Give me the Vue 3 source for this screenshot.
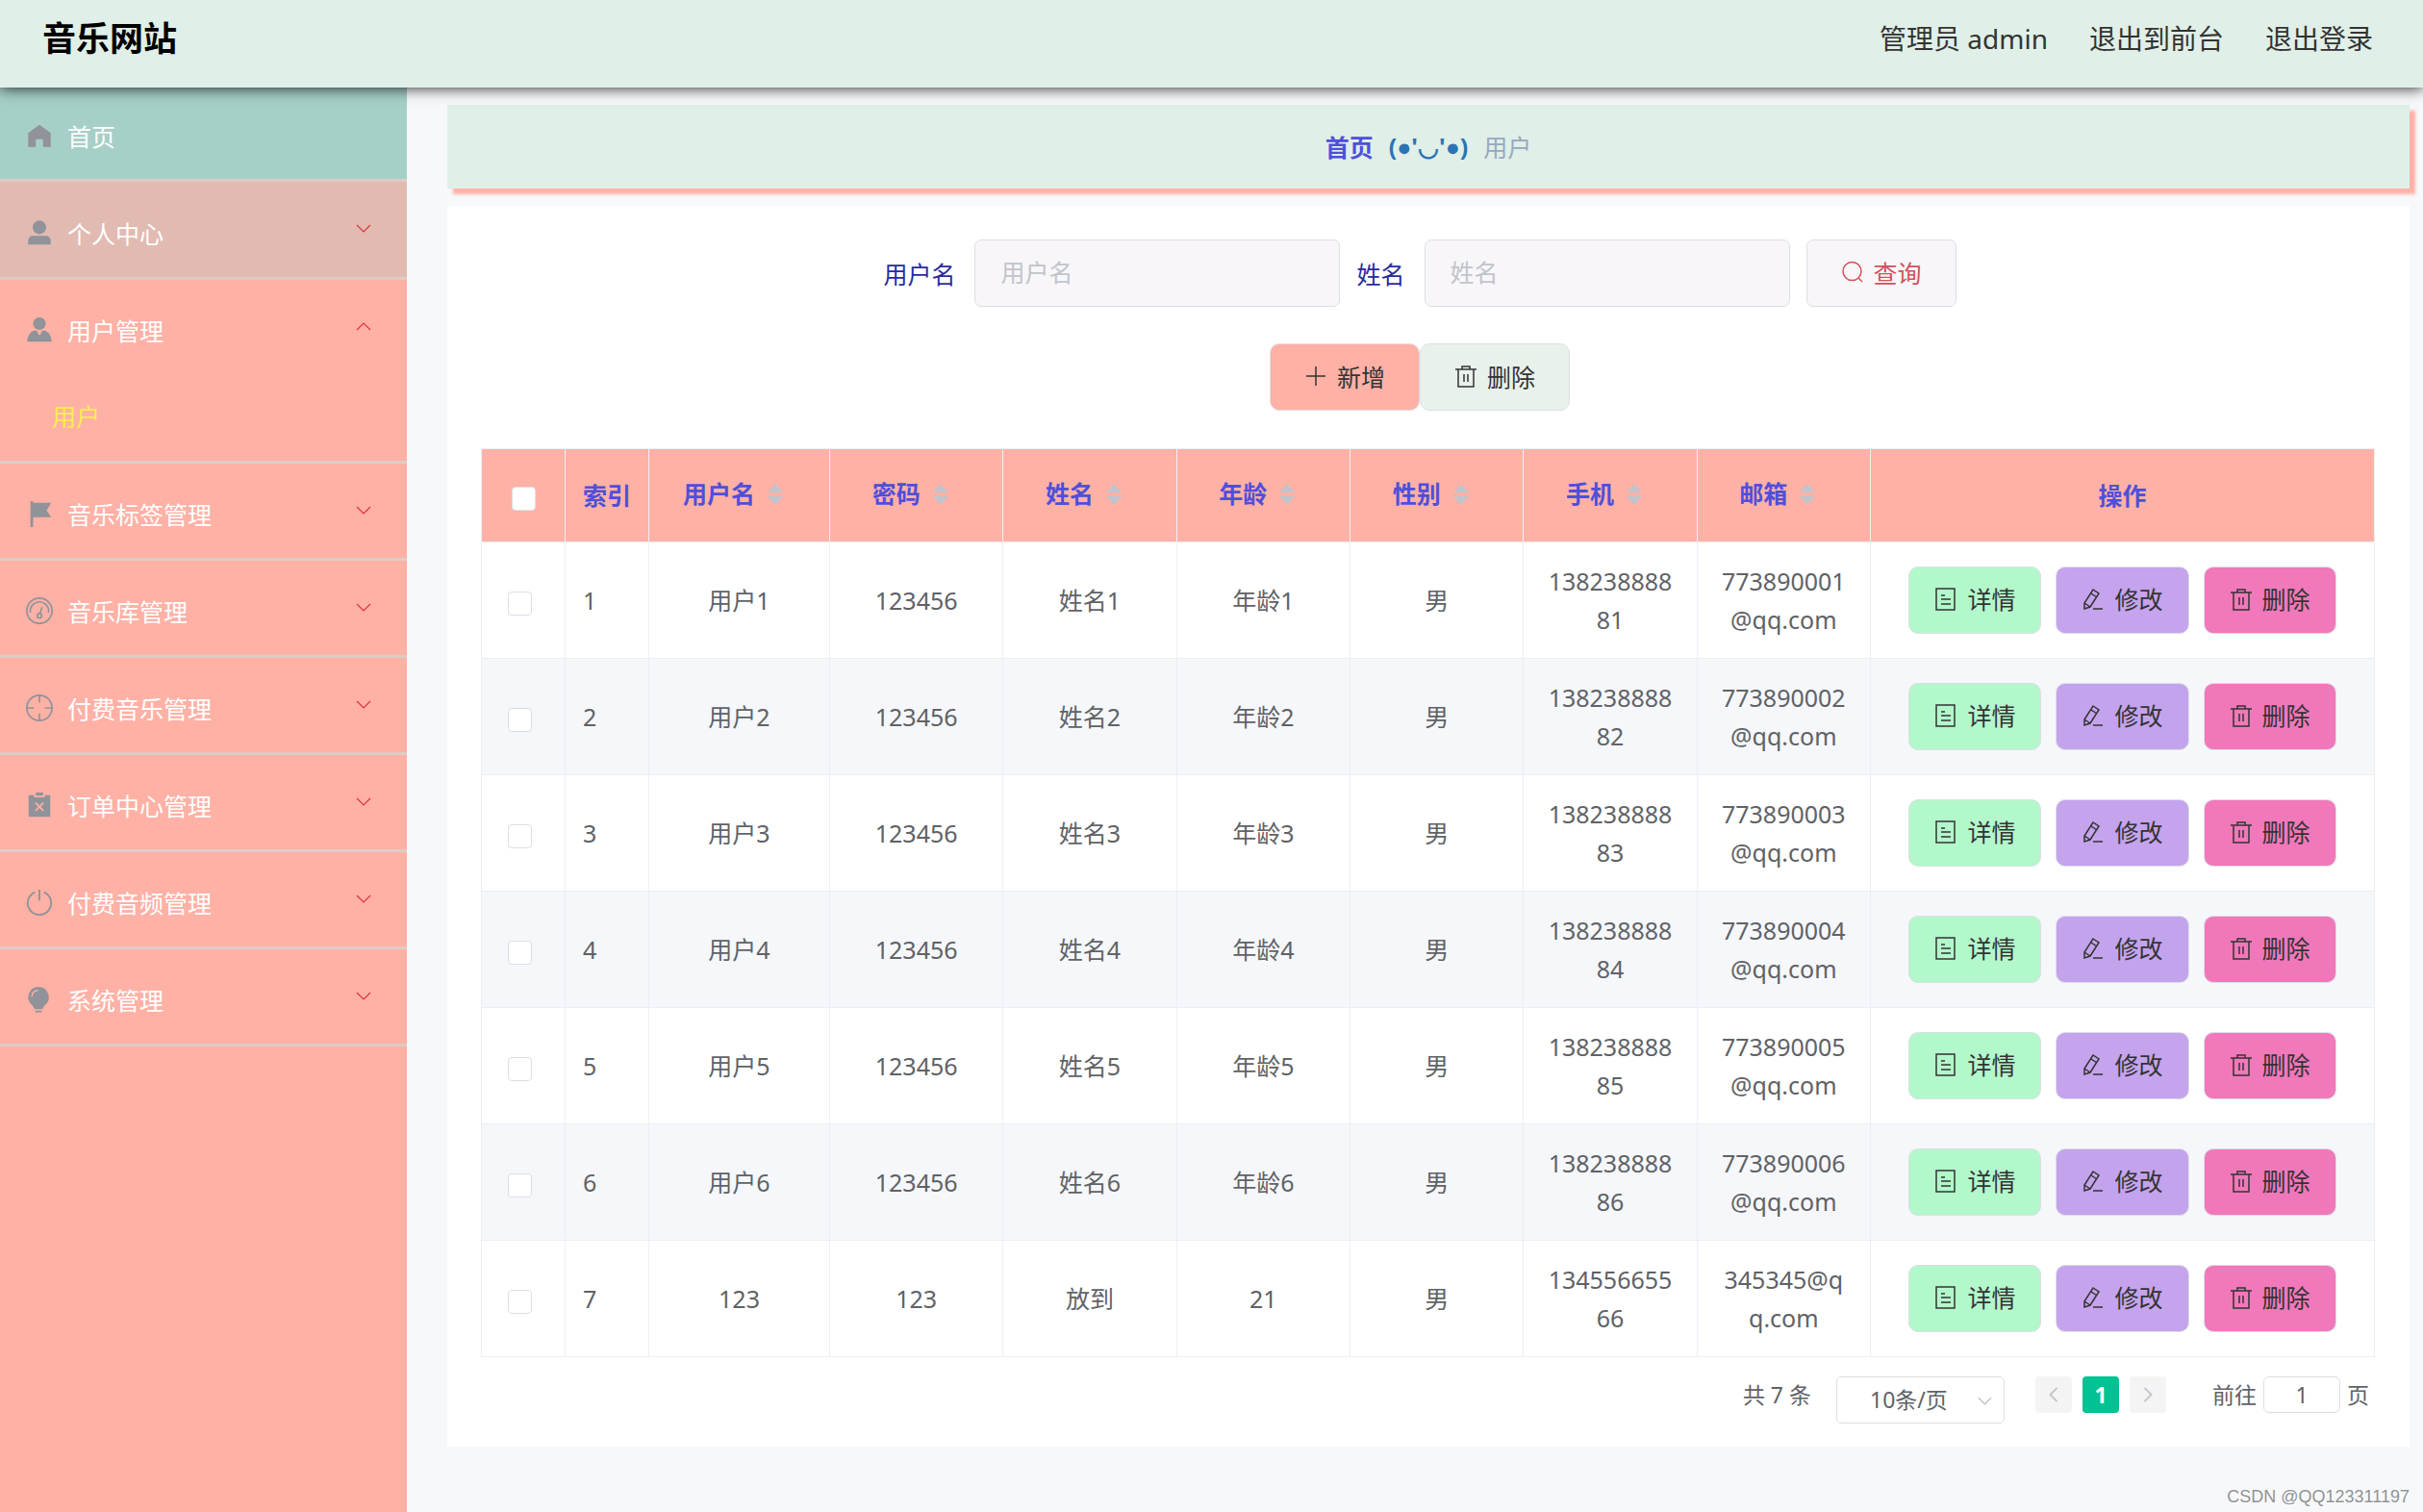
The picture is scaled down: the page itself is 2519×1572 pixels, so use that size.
<script setup>
import { ref, computed } from 'vue'

const menus = ref([
  { name: '首页', icon: 'home', type: 'home' },
  { name: '个人中心', icon: 'user', type: 'hover' },
  { name: '用户管理', icon: 'custom', open: true, children: ['用户'] },
  { name: '音乐标签管理', icon: 'flag' },
  { name: '音乐库管理', icon: 'gauge' },
  { name: '付费音乐管理', icon: 'aim' },
  { name: '订单中心管理', icon: 'order' },
  { name: '付费音频管理', icon: 'power' },
  { name: '系统管理', icon: 'bulb' }
])

const columns = [
  { prop: 'username', label: '用户名' },
  { prop: 'password', label: '密码' },
  { prop: 'realname', label: '姓名' },
  { prop: 'age', label: '年龄' },
  { prop: 'sex', label: '性别' },
  { prop: 'phone', label: '手机' },
  { prop: 'email', label: '邮箱' }
]

const dataList = ref([])
for (let i = 1; i <= 6; i++) {
  dataList.value.push({
    username: '用户' + i,
    password: '123456',
    realname: '姓名' + i,
    age: '年龄' + i,
    sex: '男',
    phone: '1382388888' + i,
    email: '77389000' + i + '@qq.com'
  })
}
dataList.value.push({
  username: '123',
  password: '123',
  realname: '放到',
  age: '21',
  sex: '男',
  phone: '13455665566',
  email: '345345@qq.com'
})

const searchForm = ref({ username: '', realname: '' })
const selected = ref([])
const pageSize = ref('10')
const pageIndex = ref('1')

const allChecked = computed({
  get: () => dataList.value.length > 0 && selected.value.length === dataList.value.length,
  set: (val) => {
    selected.value = val ? dataList.value.map((_, i) => i) : []
  }
})

const toggleMenu = (menu) => {
  if (menu.type === 'home') return
  menu.open = !menu.open
}

const deleteRow = (index) => {
  dataList.value.splice(index, 1)
  selected.value = []
}

const deleteSelected = () => {
  dataList.value = dataList.value.filter((_, i) => !selected.value.includes(i))
  selected.value = []
}
</script>

<template>
  <div class="layout">
    <header class="navbar">
      <h1 class="title">音乐网站</h1>
      <div class="right-menu">
        <span>管理员 admin</span>
        <a href="#">退出到前台</a>
        <a href="#">退出登录</a>
      </div>
    </header>

    <div class="body">
      <!-- 侧边菜单 -->
      <nav class="sidebar">
        <div v-for="menu in menus" :key="menu.name" class="menu-item" :class="menu.type">
          <button type="button" class="menu-title" @click="toggleMenu(menu)">
            <svg class="menu-icon" viewBox="0 0 32 32" fill="currentColor">
              <path v-if="menu.icon === 'home'" d="M16 4 3.500 13v15.500H12V20h8v8.500h8.500V13z" />
              <template v-else-if="menu.icon === 'user'">
                <circle cx="16" cy="10" r="7.500" />
                <path d="M3.500 29v-4.500a5 5 0 0 1 5-5h15a5 5 0 0 1 5 5V29z" />
              </template>
              <template v-else-if="menu.icon === 'custom'">
                <circle cx="16" cy="9" r="7" />
                <path d="M2.500 29c0-6 3-11 8-12.500l3.500 1 0 2 2 2.500 2-2.500 0-2 3.500-1c5 1.500 8 6.500 8 12.500z" />
              </template>
              <path v-else-if="menu.icon === 'flag'" d="M6 2h3v2h20l-5 8.500 5 7.500H9v11H6z" />
              <g v-else-if="menu.icon === 'gauge'" fill="none" stroke="currentColor" stroke-width="1.800">
                <circle cx="16" cy="16" r="14" />
                <path d="M6 18a10 10 0 0 1 3-9 10 10 0 0 1 14 0 10 10 0 0 1 3 9M19 12l-2.500 7" />
                <circle cx="16" cy="21.500" r="2.500" />
              </g>
              <g v-else-if="menu.icon === 'aim'" fill="none" stroke="currentColor" stroke-width="1.800">
                <circle cx="16" cy="16" r="14" />
                <path d="M16 2v8M16 22v8M2 16h8M22 16h8" />
              </g>
              <template v-else-if="menu.icon === 'order'">
                <path d="M12 2h8v3.500h-8z" />
                <path fill-rule="evenodd" d="M4 5h6v2.500h12V5h6v24H4zM11 14l1.300-1.300L16 16.500l3.700-3.800L21 14l-3.700 3.800L21 21.500l-1.300 1.300L16 19.100l-3.700 3.700L11 21.500l3.700-3.700z" />
              </template>
              <path v-else-if="menu.icon === 'power'" d="M16 2v12M11 5a13 13 0 1 0 10 0" fill="none" stroke="currentColor" stroke-width="2" />
              <template v-else>
                <path d="M15 2a11.500 11.500 0 0 0-7 20.500L11 27h8l3-4.500A11.500 11.500 0 0 0 15 2zM11.500 28.500h7v2h-7z" />
                <path class="shine" d="M7.500 13a7 7 0 0 1 7-7" fill="none" stroke-width="1.500" />
              </template>
            </svg>
            <span class="menu-name">{{ menu.name }}</span>
            <svg v-if="menu.type !== 'home'" class="arrow" :class="{ up: menu.open }" viewBox="0 0 16 9">
              <path d="m1 1 7 7 7-7" fill="none" stroke="currentColor" stroke-width="1.200" />
            </svg>
          </button>
          <template v-if="menu.open && menu.children">
            <a v-for="child in menu.children" :key="child" href="#" class="sub-item">{{ child }}</a>
          </template>
        </div>
      </nav>

      <main class="main">
        <div class="breadcrumb">
          <a href="#">首页</a>
          <span class="separator">(●'◡'●)</span>
          <span class="current">用户</span>
        </div>

        <section class="content">
          <form class="search-form" @submit.prevent>
            <label for="username">用户名</label>
            <input id="username" v-model="searchForm.username" type="text" placeholder="用户名">
            <label for="realname">姓名</label>
            <input id="realname" v-model="searchForm.realname" type="text" placeholder="姓名">
            <button type="submit" class="btn btn-search">
              <svg viewBox="0 0 24 24"><circle cx="11.500" cy="11" r="9.500" /><path d="m18 18 4 4" /></svg>
              查询
            </button>
          </form>

          <div class="toolbar">
            <button type="button" class="btn btn-add">
              <svg viewBox="0 0 24 24"><path d="M12 2v20M2 12h20" /></svg>
              新增
            </button>
            <button type="button" class="btn btn-remove" @click="deleteSelected">
              <svg viewBox="0 0 24 24"><path d="M1 5h22M8 5V2h8v3M4 5v18h16V5M10 10v8M14 10v8" /></svg>
              删除
            </button>
          </div>

          <table class="data-table">
            <colgroup>
              <col class="col-check">
              <col class="col-index">
              <col class="col-name">
              <col v-for="n in 6" :key="n" class="col-text">
              <col class="col-action">
            </colgroup>
            <thead>
              <tr>
                <th><input v-model="allChecked" type="checkbox" aria-label="全选"></th>
                <th class="left">索引</th>
                <th v-for="col in columns" :key="col.prop">
                  <div class="sortable">
                    {{ col.label }}
                    <svg viewBox="0 0 42 24"><path d="M21 2l8 9H13zM21 24l8-9H13z" /></svg>
                  </div>
                </th>
                <th>操作</th>
              </tr>
            </thead>
            <tbody>
              <tr v-for="(row, index) in dataList" :key="row.phone">
                <td class="left"><input v-model="selected" type="checkbox" :value="index" :aria-label="row.username"></td>
                <td class="left">{{ index + 1 }}</td>
                <td v-for="col in columns" :key="col.prop">{{ row[col.prop] }}</td>
                <td>
                  <div class="actions">
                    <button type="button" class="btn btn-detail">
                      <svg viewBox="0 0 24 24"><path d="M2 1h19v22H2zM7 8h4M7 12h10M7 17h10" /></svg>
                      详情
                    </button>
                    <button type="button" class="btn btn-edit">
                      <svg viewBox="0 0 24 24"><path d="M12 2l6 4L9 20l-6 2V16zM10 6l6 4M3 16l6 4M12 22h10" /></svg>
                      修改
                    </button>
                    <button type="button" class="btn btn-delete" @click="deleteRow(index)">
                      <svg viewBox="0 0 24 24"><path d="M1 5h22M8 5V2h8v3M4 5v18h16V5M10 10v8M14 10v8" /></svg>
                      删除
                    </button>
                  </div>
                </td>
              </tr>
            </tbody>
          </table>

          <!-- 分页 -->
          <div class="pagination">
            <span class="total">共 {{ dataList.length }} 条</span>
            <div class="size-select">
              <select v-model="pageSize" aria-label="每页条数">
                <option value="10">10条/页</option>
                <option value="20">20条/页</option>
                <option value="50">50条/页</option>
              </select>
              <svg viewBox="0 0 16 9"><path d="m1 1 7 7 7-7" /></svg>
            </div>
            <div class="pager">
              <button type="button" aria-label="上一页" disabled>
                <svg viewBox="0 0 12 20"><path d="m10 2-8 8 8 8" /></svg>
              </button>
              <button type="button" class="active">1</button>
              <button type="button" aria-label="下一页" disabled>
                <svg viewBox="0 0 12 20"><path d="m2 2 8 8-8 8" /></svg>
              </button>
            </div>
            <label class="jump">前往 <input v-model="pageIndex" type="text"> 页</label>
          </div>
        </section>

        <footer class="watermark">CSDN @QQ123311197</footer>
      </main>
    </div>
  </div>
</template>

<style>
body {
  margin: 0;
  background: #f6f8fa;
}
</style>

<style scoped>
.layout {
  display: flex;
  flex-direction: column;
  min-height: 100vh;
  font-family: "Noto Sans", "Noto Sans CJK SC", sans-serif;
  font-size: 25px;
  color: #606266;
}
.layout * {
  box-sizing: border-box;
}
button,
input,
select {
  font: inherit;
  color: inherit;
}
button {
  cursor: pointer;
}
a {
  text-decoration: none;
}

.navbar {
  position: relative;
  z-index: 1;
  display: flex;
  justify-content: space-between;
  align-items: center;
  height: 91px;
  padding: 0 52px 12px 44px;
  background: #e0efe7;
  box-shadow: 0 1px 14px rgba(0, 0, 0, 0.8);
}
.title {
  margin: 0;
  font-size: 35px;
  line-height: 40px;
  color: #000;
}
.right-menu {
  display: flex;
  gap: 43px;
  font-size: 28px;
  line-height: 40px;
  color: #333;
}
.right-menu a {
  color: #333;
}

.body {
  display: flex;
  flex: 1;
}

.sidebar {
  width: 423px;
  flex-shrink: 0;
  background: #ffb1a6;
}
.menu-item {
  border-bottom: 3px solid #dfcbc5;
}
.menu-title {
  display: flex;
  align-items: center;
  width: 100%;
  height: 98px;
  padding: 6px 37px 0 26px;
  border: 0;
  background: none;
  color: #fff;
  text-align: left;
}
.home {
  background: #a6cfc7;
}
.home .menu-title {
  height: 95px;
  padding-top: 4px;
}
.hover {
  background: #e1bbb2;
}
.hover .menu-title {
  height: 99px;
}
.menu-icon {
  width: 30px;
  height: 30px;
  margin-right: 14px;
  color: #909399;
}
.shine {
  stroke: #ffb1a6;
}
.menu-name {
  flex: 1;
}
.arrow {
  width: 16px;
  height: 9px;
  margin-bottom: 8px;
  color: #e0303c;
}
.arrow.up {
  transform: rotate(180deg);
}
.sub-item {
  display: block;
  height: 90px;
  padding-left: 54px;
  line-height: 88px;
  color: #fbee4b;
}

.main {
  flex: 1;
  min-width: 0;
  padding: 18px 14px 0 42px;
}

.breadcrumb {
  display: flex;
  justify-content: center;
  align-items: center;
  gap: 16px;
  height: 87px;
  padding-bottom: 2px;
  background: #e0efe7;
  box-shadow: 6px 6px 3px #ffb1a6;
}
.breadcrumb a {
  font-weight: bold;
  color: #4f4fd9;
}
.separator {
  font-family: "Noto Sans", "Liberation Sans", sans-serif;
  font-weight: bold;
  color: #2c73b5;
}
.current {
  color: #97a8be;
}

.content {
  margin-top: 18px;
  padding: 35px 36px 24px 35px;
  background: #fff;
}

.search-form {
  display: flex;
  justify-content: center;
  align-items: center;
  padding-right: 17px;
}
.search-form label {
  margin-right: 20px;
  color: #2a2a9c;
}
.search-form input {
  width: 380px;
  height: 70px;
  margin-right: 17px;
  padding: 0 26px 2px;
  border: 1px solid #dcdfe6;
  border-radius: 7px;
  background: #f8f6f8;
}
.search-form input::placeholder {
  color: #c0c4cc;
}

.btn {
  display: inline-flex;
  align-items: center;
  justify-content: center;
  gap: 10px;
  height: 70px;
  padding: 0 35px 2px;
  border: 1px solid #dcdfe6;
  border-radius: 10px;
  color: #333;
  white-space: nowrap;
}
.btn svg {
  width: 24px;
  height: 24px;
  fill: none;
  stroke: currentColor;
  stroke-width: 1.5;
}
.btn-search {
  border-radius: 7px;
  background: #f8f6f8;
  color: #d3505c;
}
.toolbar {
  display: flex;
  justify-content: center;
  margin: 38px 0 39px;
  padding-right: 17px;
}
.btn-add {
  background: #ffb1a6;
}
.btn-remove {
  background: #e9f1eb;
}

.data-table {
  width: 100%;
  table-layout: fixed;
  border-collapse: separate;
  border-spacing: 0;
  border: 1px solid #ebeef5;
  border-width: 1px 0 0 1px;
  line-height: 40px;
  text-align: center;
}
.col-check,
.col-index {
  width: 87px;
}
.col-name {
  width: 188px;
}
.col-action {
  width: 524px;
}
.data-table th,
.data-table td {
  border: 1px solid #ebeef5;
  border-width: 0 1px 1px 0;
}
.data-table th {
  height: 97px;
  padding: 0;
  background: #ffb1a6;
  color: #4f4fd9;
}
.data-table td {
  height: 121px;
  padding: 0 22px;
  word-break: break-all;
}
.data-table td:last-child {
  padding: 0;
}
.data-table .left {
  padding: 0 0 0 18px;
  text-align: left;
}
.data-table td.left:first-child {
  padding-left: 27px;
}
.data-table tbody tr:nth-child(even) {
  background: #f5f7fa;
}
.data-table input {
  appearance: none;
  width: 25px;
  height: 25px;
  margin: 0;
  border: 1px solid #dcdfe6;
  border-radius: 4px;
  background: #fff;
  vertical-align: middle;
}
.data-table input:checked {
  background: #00c292;
}
.sortable {
  display: flex;
  justify-content: center;
  align-items: center;
  padding-bottom: 5px;
}
.sortable svg {
  width: 42px;
  height: 24px;
  fill: #c0c4cc;
}
.actions {
  display: flex;
  justify-content: center;
  gap: 15px;
}
.actions .btn {
  padding: 0 26px 2px;
}
.btn-detail {
  background: rgba(171, 247, 197, 0.9);
}
.btn-edit {
  background: rgba(191, 153, 235, 0.9);
}
.btn-delete {
  background: rgba(240, 105, 178, 0.9);
}

.pagination {
  display: flex;
  justify-content: flex-end;
  align-items: flex-start;
  margin-top: 20px;
  padding-right: 6px;
  font-size: 23px;
  line-height: 38px;
}
.size-select {
  position: relative;
  margin: 0 32px 0 26px;
}
.size-select select {
  appearance: none;
  display: block;
  width: 175px;
  height: 49px;
  padding: 0 0 2px 34px;
  border: 1px solid #dcdfe6;
  border-radius: 5px;
  background: #fff;
}
.size-select svg {
  position: absolute;
  top: 21px;
  right: 13px;
  width: 15px;
  height: 9px;
  fill: none;
  stroke: #c0c4cc;
  stroke-width: 1.5;
  pointer-events: none;
}
.pager {
  display: flex;
  gap: 11px;
  margin-right: 48px;
}
.pager button {
  width: 38px;
  height: 38px;
  padding: 0;
  border: 0;
  border-radius: 4px;
  background: #f4f4f5;
  line-height: 38px;
}
.pager button.active {
  background: #00c292;
  color: #fff;
  font-weight: bold;
}
.pager svg {
  width: 12px;
  height: 18px;
  fill: none;
  stroke: #c0c4cc;
  stroke-width: 2;
}
.jump {
  display: flex;
  gap: 7px;
}
.jump input {
  width: 80px;
  height: 38px;
  padding: 0;
  border: 1px solid #dcdfe6;
  border-radius: 6px;
  text-align: center;
}

.watermark {
  padding-top: 38px;
  font-family: "Liberation Sans", Arial, sans-serif;
  font-size: 18px;
  line-height: 28px;
  text-align: right;
  color: #909296;
  text-shadow: 1px 1px 0 #fff;
}
</style>
